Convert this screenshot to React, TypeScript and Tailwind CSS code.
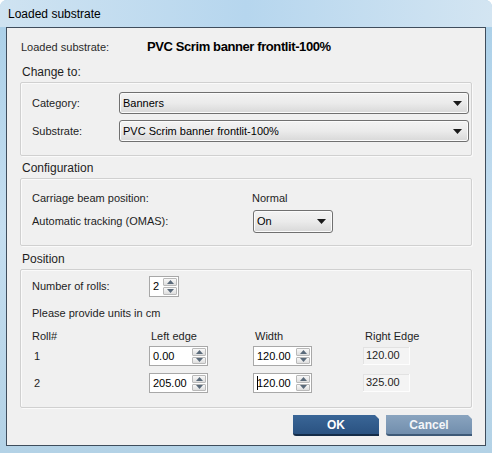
import React from "react";

const font = "font-['Liberation_Sans',Arial,sans-serif]";

function Arrow() {
  return (
    <svg width="9" height="5" viewBox="0 0 9 5" className="shrink-0">
      <path d="M0 0h9L4.5 5z" fill="#1a1a1a" />
    </svg>
  );
}

function Select({ value, className }: { value: string; className: string }) {
  return (
    <div
      className={`flex items-center justify-between rounded-[3px] border border-[#707070] bg-gradient-to-b from-[#f3f3f3] via-[#ebebeb] to-[#d8d8d8] pl-[3px] pr-[6px] text-[11px] text-black shadow-[inset_0_0_0_1px_#fbfbfb] ${className}`}
    >
      <span>{value}</span>
      <Arrow />
    </div>
  );
}

function SpinButtons() {
  return (
    <div className="flex h-full w-[15px] flex-col gap-[1px] py-[1px] pr-[1px]">
      <div className="flex flex-1 items-center justify-center rounded-[1px] border border-[#b9b9b9] bg-gradient-to-b from-[#f8f8f8] to-[#dedede]">
        <svg width="7" height="4" viewBox="0 0 7 4">
          <path d="M0 4L3.5 0L7 4z" fill="#5a6a7a" />
        </svg>
      </div>
      <div className="flex flex-1 items-center justify-center rounded-[1px] border border-[#b9b9b9] bg-gradient-to-b from-[#f8f8f8] to-[#dedede]">
        <svg width="7" height="4" viewBox="0 0 7 4">
          <path d="M0 0h7L3.5 4z" fill="#5a6a7a" />
        </svg>
      </div>
    </div>
  );
}

function Spin({ value, className, caret }: { value: string; className: string; caret?: boolean }) {
  return (
    <div className={`flex items-center border border-[#a8a8a8] bg-white text-[11px] text-black ${className}`}>
      <div className="flex flex-1 items-center pl-[3px]">
        {caret && <span className="mr-[-1px] inline-block h-[14px] w-[1px] bg-black" />}
        <span>{value}</span>
      </div>
      <SpinButtons />
    </div>
  );
}

function Group({ title, className, children }: { title: string; className: string; children: React.ReactNode }) {
  return (
    <div>
      <div className="pl-[15px] text-[12px] leading-[14px] text-[#1e1e1e]">{title}</div>
      <div
        className={`mx-[13px] rounded-[2px] border border-[#d0d0d0] shadow-[inset_1px_1px_0_#fafafa,1px_1px_0_#fafafa] ${className}`}
      >
        {children}
      </div>
    </div>
  );
}

function ReadOnly({ value }: { value: string }) {
  return (
    <div className="flex h-[18px] w-[47px] items-center border-r border-b border-[#fdfdfd] bg-[#f4f4f4] pl-[3px] shadow-[inset_1px_1px_0_#e2e2e2]">
      {value}
    </div>
  );
}

export default function App() {
  return (
    <div className={`${font} flex h-[453px] w-[492px] flex-col overflow-hidden rounded-t-[7px] bg-gradient-to-b from-[#a9cfe8] via-[#c5def0] to-[#b3d2e6]`}>
      {/* Title bar */}
      <div className="flex h-[27px] shrink-0 items-center bg-gradient-to-r from-[#cfe3f1] via-[#b6d6ee] to-[#d3e5f2] pl-[8px] text-[12px] text-black">
        Loaded substrate
      </div>

      {/* Client area */}
      <div className="mx-[6px] mb-[7px] flex flex-1 flex-col border border-[#3f4d5c] bg-[#f0f0f0] text-[11px] text-[#1e1e1e]">
        <div className="flex h-[37px] items-center pl-[14px] pt-[1px]">
          <span className="w-[126px] text-[#2a2a2a]">Loaded substrate:</span>
          <span className="text-[13px] font-bold tracking-[-0.4px] text-black">PVC Scrim banner frontlit-100%</span>
        </div>

        <Group title="Change to:" className="mt-[3px] flex h-[74px] flex-col gap-[6px] pt-[9px]">
          <div className="flex items-center">
            <span className="w-[98px] pl-[11px]">Category:</span>
            <Select value="Banners" className="h-[22px] w-[350px]" />
          </div>
          <div className="flex items-center">
            <span className="w-[98px] pl-[11px]">Substrate:</span>
            <Select value="PVC Scrim banner frontlit-100%" className="h-[22px] w-[350px]" />
          </div>
        </Group>

        <div className="mt-[5px]" />
        <Group title="Configuration" className="mt-[3px] flex h-[68px] flex-col pt-[12px]">
          <div className="flex h-[15px] items-center">
            <span className="w-[231px] pl-[11px]">Carriage beam position:</span>
            <span>Normal</span>
          </div>
          <div className="mt-[4px] flex items-center">
            <span className="w-[232px] pl-[11px]">Automatic tracking (OMAS):</span>
            <Select value="On" className="h-[23px] w-[80px]" />
          </div>
        </Group>

        <div className="mt-[6px]" />
        <Group title="Position" className="mt-[3px] flex h-[139px] flex-col pt-[6px]">
          <div className="flex items-center">
            <span className="w-[128px] pl-[11px]">Number of rolls:</span>
            <Spin value="2" className="h-[21px] w-[30px]" />
          </div>
          <div className="mt-[8px] pl-[11px]">Please provide units in cm</div>
          <div className="mt-[6px] flex">
            <span className="w-[130px] pl-[11px]">Roll#</span>
            <span className="w-[104px]">Left edge</span>
            <span className="w-[110px]">Width</span>
            <span>Right Edge</span>
          </div>
          <div className="mt-[2px] flex items-center">
            <span className="w-[128px] pl-[13px]">1</span>
            <Spin value="0.00" className="h-[20px] w-[59px]" />
            <div className="w-[45px]" />
            <Spin value="120.00" className="h-[20px] w-[59px]" />
            <div className="w-[51px]" />
            <ReadOnly value="120.00" />
          </div>
          <div className="mt-[7px] flex items-center">
            <span className="w-[128px] pl-[13px]">2</span>
            <Spin value="205.00" className="h-[20px] w-[59px]" />
            <div className="w-[45px]" />
            <Spin value="120.00" caret className="h-[20px] w-[59px]" />
            <div className="w-[51px]" />
            <ReadOnly value="325.00" />
          </div>
        </Group>

        <div className="mt-[7px] flex justify-end gap-[7px] pr-[13px]">
          <button className="flex h-[21px] w-[86px] items-center justify-center rounded-bl-[3px] border-b-2 border-[#142c48] bg-gradient-to-b from-[#3a6697] to-[#2a5281] text-[12px] font-bold text-white [clip-path:polygon(0_0,calc(100%-4px)_0,100%_4px,100%_100%,0_100%)]">
            OK
          </button>
          <button className="flex h-[21px] w-[86px] items-center justify-center rounded-bl-[3px] border-b-2 border-[#3e5a78] bg-gradient-to-b from-[#8aa4bf] to-[#718ead] text-[12px] font-bold text-[#f4f6f9] [clip-path:polygon(0_0,calc(100%-4px)_0,100%_4px,100%_100%,0_100%)]">
            Cancel
          </button>
        </div>
      </div>
    </div>
  );
}
